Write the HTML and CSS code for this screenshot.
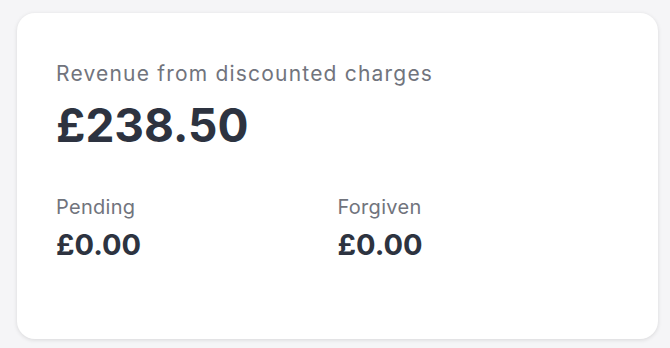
FILE: index.html
```html
<!DOCTYPE html>
<html lang="en">
<head>
  <meta charset="UTF-8" />
  <meta name="viewport" content="width=device-width, initial-scale=1" />
  <title>Discount revenue</title>
  <link rel="stylesheet" href="styles.css">
</head>
<body>
  <div class="card">
    <div class="stat-label">Revenue from discounted charges</div>
    <div class="stat-total">£238.50</div>

    <div class="breakdown">
      <div class="item">
        <div class="item-label">Pending</div>
        <div class="item-value">£0.00</div>
      </div>
      <div class="item">
        <div class="item-label">Forgiven</div>
        <div class="item-value">£0.00</div>
      </div>
    </div>
  </div>
</body>
</html>
```

FILE: styles.css
```css
body {
  margin: 0;
  padding: 13px 12px 9px 17px;
  font-family: Inter, 'Noto Sans', sans-serif;
  background-color: #f5f5f7;
  color: #2d3340;
}

.card {
  background: #fff;
  border-radius: 18px;
  height: 326px;
  box-sizing: border-box;
  padding: 48px 39px;
  box-shadow: 0 1px 4px rgba(0, 0, 0, 0.12);
}

.stat-label {
  font-size: 21px;
  letter-spacing: 1.2px;
  color: #71747d;
  line-height: 26px;
}

.stat-total {
  margin-top: 10px;
  font-size: 46px;
  font-weight: 700;
  line-height: 56px;
}

.breakdown {
  display: grid;
  grid-template-columns: 1fr 1fr;
  margin-top: 42px;
}

.item-label {
  font-size: 20px;
  letter-spacing: 0.3px;
  color: #71747d;
  line-height: 24px;
}

.item-value {
  margin-top: 8px;
  font-size: 29px;
  font-weight: 700;
  line-height: 36px;
}
```
